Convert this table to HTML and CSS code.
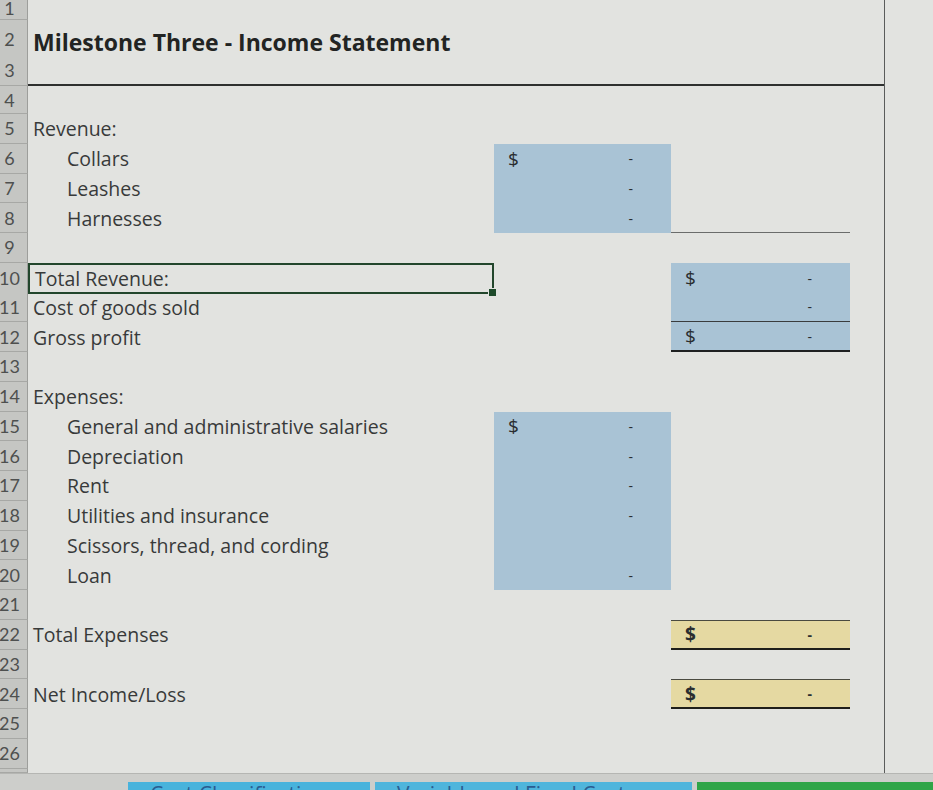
FILE: index.html
```html
<!DOCTYPE html>
<html>
<head>
<meta charset="utf-8">
<link rel="stylesheet" href="styles.css">
</head>
<body>
<div class="sheet">
  <div class="row r1"><div class="rh">1</div><div class="a"></div><div class="b"></div><div class="c"></div><div class="d"></div><div class="e"></div></div>
  <div class="row r2"><div class="rh">2</div><div class="a title">Milestone Three - Income Statement</div><div class="b"></div><div class="c"></div><div class="d"></div><div class="e"></div></div>
  <div class="row r3"><div class="rh">3</div><div class="a rule"></div><div class="b rule"></div><div class="c rule"></div><div class="d rule"></div><div class="e"></div></div>
  <div class="row r4"><div class="rh">4</div><div class="a"></div><div class="b"></div><div class="c"></div><div class="d"></div><div class="e"></div></div>
  <div class="row"><div class="rh">5</div><div class="a">Revenue:</div><div class="b"></div><div class="c"></div><div class="d"></div><div class="e"></div></div>
  <div class="row"><div class="rh">6</div><div class="a ind">Collars</div><div class="b blue acc"><span>$</span><span>-</span></div><div class="c"></div><div class="d"></div><div class="e"></div></div>
  <div class="row"><div class="rh">7</div><div class="a ind">Leashes</div><div class="b blue acc"><span></span><span>-</span></div><div class="c"></div><div class="d"></div><div class="e"></div></div>
  <div class="row"><div class="rh">8</div><div class="a ind">Harnesses</div><div class="b blue acc"><span></span><span>-</span></div><div class="c under"></div><div class="d"></div><div class="e"></div></div>
  <div class="row"><div class="rh">9</div><div class="a"></div><div class="b"></div><div class="c"></div><div class="d"></div><div class="e"></div></div>
  <div class="row"><div class="rh">10</div><div class="a selected">Total Revenue:<span class="handle"></span></div><div class="b"></div><div class="c blue acc"><span>$</span><span>-</span></div><div class="d"></div><div class="e"></div></div>
  <div class="row"><div class="rh">11</div><div class="a">Cost of goods sold</div><div class="b"></div><div class="c blue acc thin"><span></span><span>-</span></div><div class="d"></div><div class="e"></div></div>
  <div class="row"><div class="rh">12</div><div class="a">Gross profit</div><div class="b"></div><div class="c blue acc thick"><span>$</span><span>-</span></div><div class="d"></div><div class="e"></div></div>
  <div class="row"><div class="rh">13</div><div class="a"></div><div class="b"></div><div class="c"></div><div class="d"></div><div class="e"></div></div>
  <div class="row"><div class="rh">14</div><div class="a">Expenses:</div><div class="b"></div><div class="c"></div><div class="d"></div><div class="e"></div></div>
  <div class="row"><div class="rh">15</div><div class="a ind">General and administrative salaries</div><div class="b blue acc"><span>$</span><span>-</span></div><div class="c"></div><div class="d"></div><div class="e"></div></div>
  <div class="row"><div class="rh">16</div><div class="a ind">Depreciation</div><div class="b blue acc"><span></span><span>-</span></div><div class="c"></div><div class="d"></div><div class="e"></div></div>
  <div class="row"><div class="rh">17</div><div class="a ind">Rent</div><div class="b blue acc"><span></span><span>-</span></div><div class="c"></div><div class="d"></div><div class="e"></div></div>
  <div class="row"><div class="rh">18</div><div class="a ind">Utilities and insurance</div><div class="b blue acc"><span></span><span>-</span></div><div class="c"></div><div class="d"></div><div class="e"></div></div>
  <div class="row"><div class="rh">19</div><div class="a ind">Scissors, thread, and cording</div><div class="b blue acc"><span></span><span></span></div><div class="c"></div><div class="d"></div><div class="e"></div></div>
  <div class="row"><div class="rh">20</div><div class="a ind">Loan</div><div class="b blue acc"><span></span><span>-</span></div><div class="c"></div><div class="d"></div><div class="e"></div></div>
  <div class="row"><div class="rh">21</div><div class="a"></div><div class="b"></div><div class="c"></div><div class="d"></div><div class="e"></div></div>
  <div class="row"><div class="rh">22</div><div class="a">Total Expenses</div><div class="b"></div><div class="c yellow acc bold"><span>$</span><span>-</span></div><div class="d"></div><div class="e"></div></div>
  <div class="row"><div class="rh">23</div><div class="a"></div><div class="b"></div><div class="c"></div><div class="d"></div><div class="e"></div></div>
  <div class="row"><div class="rh">24</div><div class="a">Net Income/Loss</div><div class="b"></div><div class="c yellow acc bold"><span>$</span><span>-</span></div><div class="d"></div><div class="e"></div></div>
  <div class="row"><div class="rh">25</div><div class="a"></div><div class="b"></div><div class="c"></div><div class="d"></div><div class="e"></div></div>
  <div class="row"><div class="rh">26</div><div class="a"></div><div class="b"></div><div class="c"></div><div class="d"></div><div class="e"></div></div>
  <div class="row tail"><div class="rh"></div><div class="a"></div><div class="b"></div><div class="c"></div><div class="d"></div><div class="e"></div></div>
  <div class="tabbar">
    <div class="tabnav"></div>
    <div class="tab t1">Cost Classification</div>
    <div class="tab t2">Variable and Fixed Costs</div>
    <div class="tab t3"></div>
  </div>
</div>
</body>
</html>
```

FILE: styles.css
```css
html, body {
  margin: 0;
  padding: 0;
  background: #e2e3e0;
  overflow: hidden;
}
body {
  width: 933px;
  height: 790px;
  font-family: "Open Sans", "Lato", sans-serif;
}
.sheet {
  margin-left: -8px;
  width: 941px;
  display: flex;
  flex-direction: column;
}
.row {
  display: grid;
  grid-template-columns: 36px 466px 177px 179px 34px 1fr;
  height: 29.75px;
  color: #383a3a;
  font-size: 19.5px;
}
.row > div {
  display: flex;
  align-items: center;
  min-width: 0;
  white-space: nowrap;
  box-sizing: border-box;
}
.r1 { height: 20px; }
.r2 { height: 34px; }
.r3 { height: 32px; }
.r4 { height: 28px; }
.tail { height: 4px; }
.rh {
  background: #c5c6c3;
  border-right: 1px solid #9d9e9b;
  border-bottom: 1px solid #a7a8a5;
  justify-content: center;
  color: #4e504f;
  font-family: "Lato", sans-serif;
  font-size: 18px;
  overflow: hidden;
}
.r1 .rh { align-items: flex-start; line-height: 16px; }
.a { padding-left: 5px; }
.a.ind { padding-left: 39px; }
.title {
  font-weight: 700;
  font-size: 23px;
  color: #222423;
  padding-top: 6px;
}
.rule { border-bottom: 2px solid #2e302f; }
.e { border-left: 1px solid #5a5c5b; }
.blue { background: #a9c3d5; }
.yellow {
  background: #e5d9a2;
  border-top: 1px solid #4a4a40;
  border-bottom: 2px solid #1f1f1a;
}
.acc {
  justify-content: space-between;
  padding-left: 14px;
  padding-right: 38px;
  color: #2a2d30;
  font-size: 19px;
}
.acc span:last-child { font-size: 14px; }
.bold { font-weight: 700; }
.thin { border-bottom: 1px solid #3a3c3d; }
.thick { border-bottom: 2px solid #1e2021; }
.under { border-bottom: 1px solid #6a6c6b; }
.selected {
  position: relative;
  border: 2px solid #22462c;
}
.handle {
  position: absolute;
  right: -5px;
  bottom: -5px;
  width: 7px;
  height: 7px;
  background: #1d4a2a;
  border: 1px solid #e2e3e0;
}
.tabbar {
  height: 22px;
  background: #cdcecb;
  display: flex;
  align-items: flex-end;
  gap: 5px;
  border-top: 1px solid #b5b6b3;
}
.tabnav { width: 131px; }
.tab {
  height: 14px;
  overflow: hidden;
  font-size: 21px;
  line-height: 1;
  padding-top: 2px;
  padding-left: 22px;
  color: #2a5d92;
  box-sizing: border-box;
}
.t1 { width: 242px; background: #48b3dc; }
.t2 { width: 317px; background: #4fb5dc; }
.t3 { flex: 1; background: #2fa548; }
```
